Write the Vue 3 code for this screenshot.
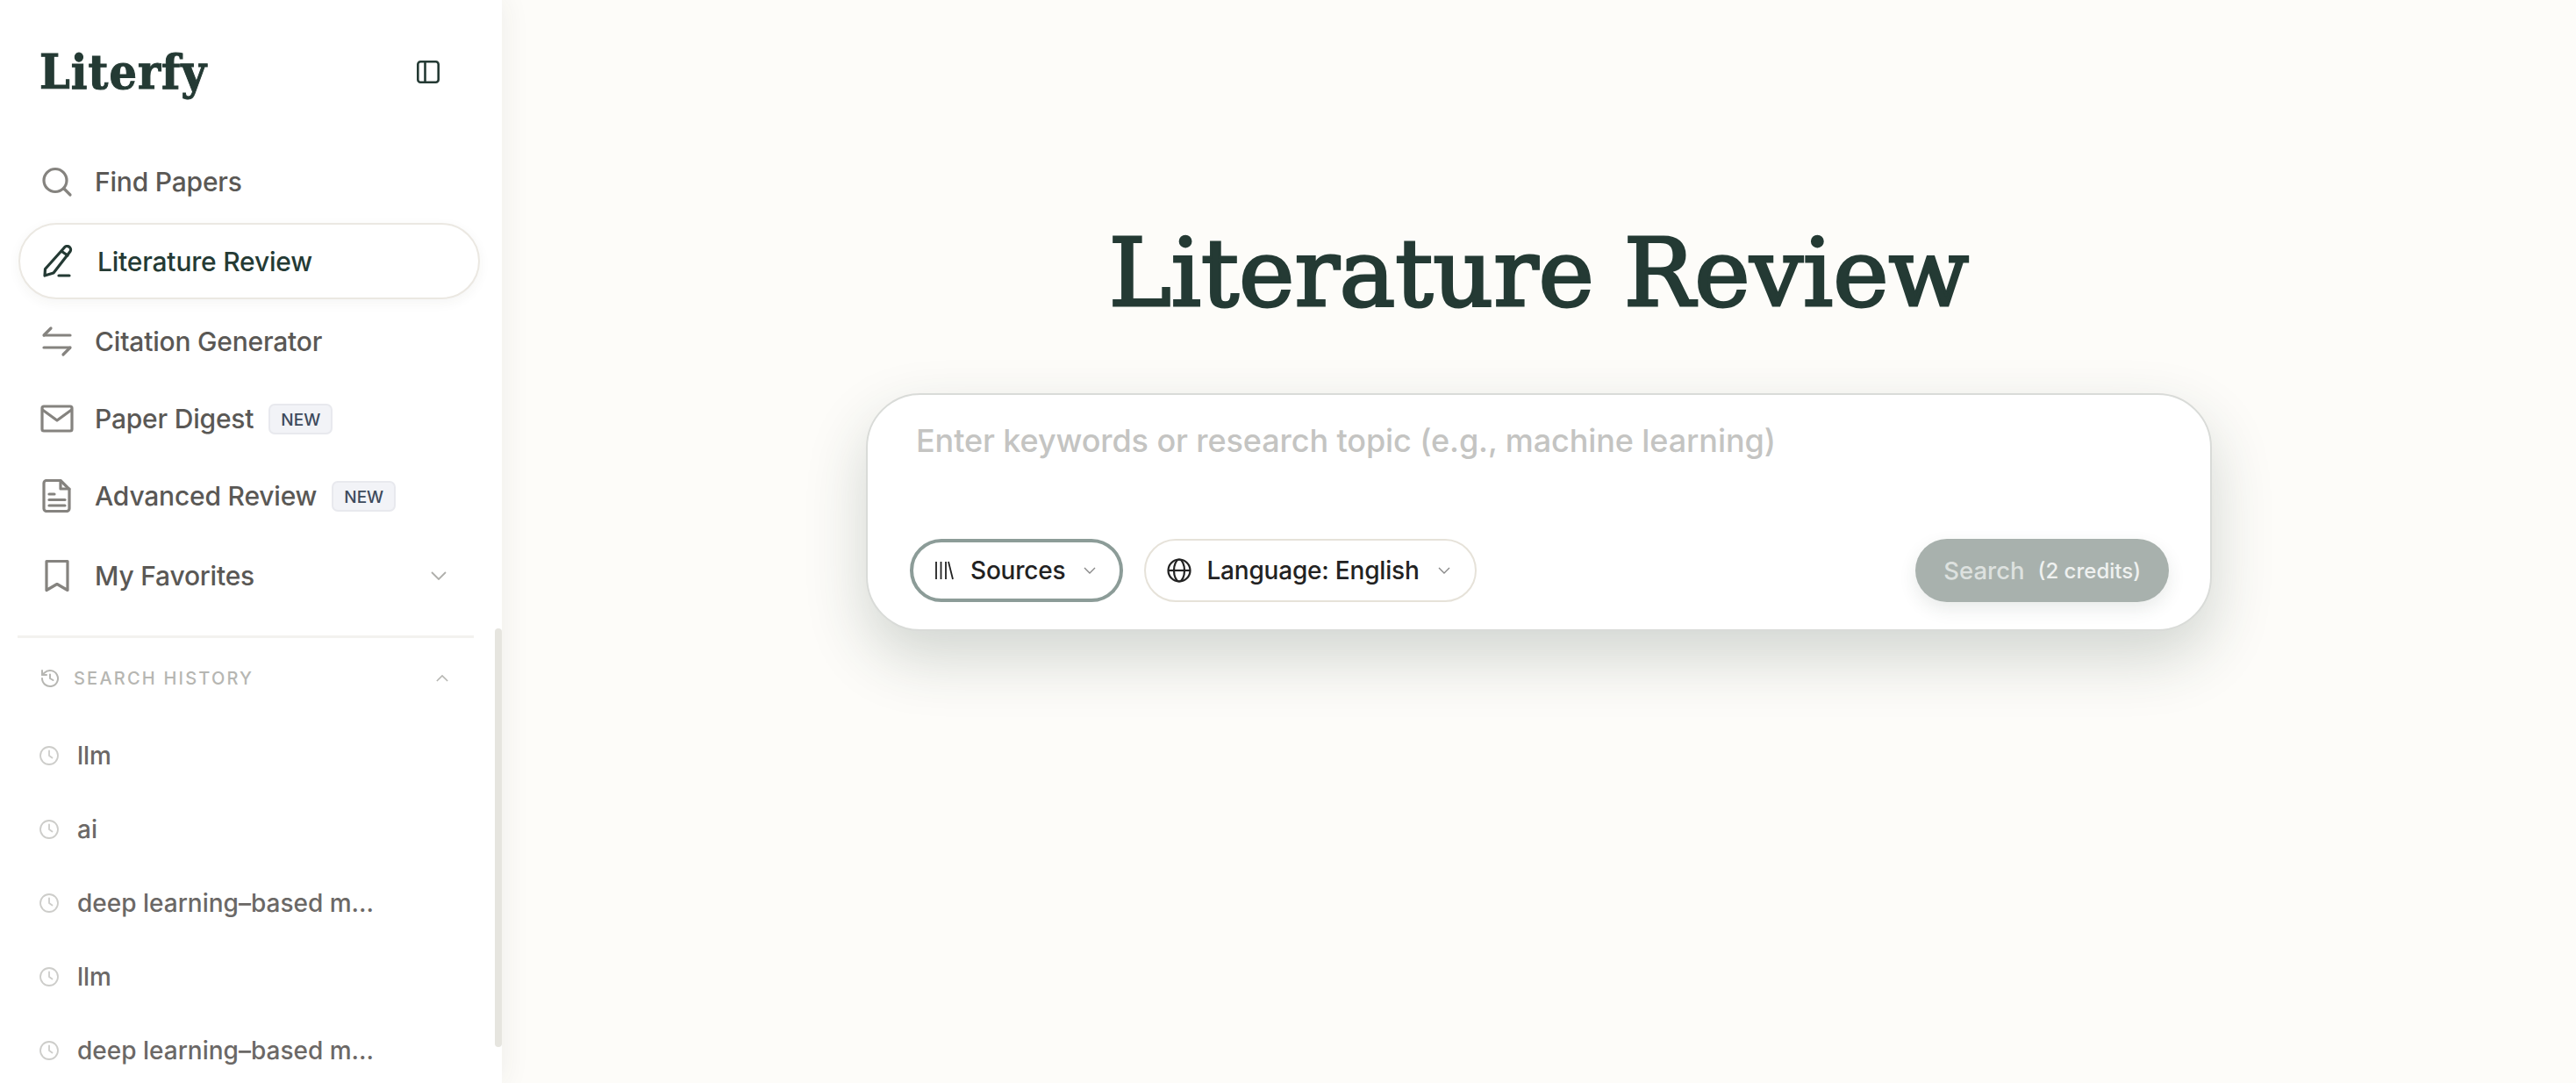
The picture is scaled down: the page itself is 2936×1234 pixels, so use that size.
<template>
  <div class="app">
    <aside class="sidebar">
      <div class="brand">
        <span class="logo">Literfy</span>
        <button class="collapse">
          <svg viewBox="0 0 26 26" width="26" height="26" fill="none" stroke="currentColor" stroke-width="2.6">
            <rect x="1.3" y="1.3" width="23.4" height="23.4" rx="3" />
            <line x1="9.5" y1="1.3" x2="9.5" y2="24.7" />
          </svg>
        </button>
      </div>

      <nav class="nav">
        <a v-for="item in navItems" :key="item.label" class="nav-item" :class="{ active: item.active }">
          <svg class="nav-icon" viewBox="0 0 38 38" fill="none" stroke="currentColor" stroke-width="3.2" stroke-linecap="round" stroke-linejoin="round">
            <path v-for="d in item.icon" :key="d" :d="d" />
          </svg>
          <span class="nav-label">{{ item.label }}</span>
          <span v-if="item.badge" class="badge">NEW</span>
          <svg v-if="item.chevron" class="nav-chevron" viewBox="0 0 18 10" fill="none" stroke="currentColor" stroke-width="1.8">
            <path d="M1 1l8 8 8-8" />
          </svg>
        </a>
      </nav>

      <div class="history">
        <div class="history-head">
          <svg class="history-icon" viewBox="0 0 22 22" fill="none" stroke="currentColor" stroke-width="2" stroke-linecap="round" stroke-linejoin="round">
            <path d="M2 11a9 9 0 1 0 2.8-6.5L2 7" />
            <path d="M2 2v5h5" />
            <path d="M11 6.5V11l3.5 2" />
          </svg>
          <span class="history-title">SEARCH HISTORY</span>
          <svg class="history-chevron" viewBox="0 0 16 9" fill="none" stroke="currentColor" stroke-width="1.8">
            <path d="M1 8l7-7 7 7" />
          </svg>
        </div>
        <div v-for="(q, i) in history" :key="i" class="history-item">
          <svg class="clock" viewBox="0 0 22 22" fill="none" stroke="currentColor" stroke-width="1.8" stroke-linecap="round" stroke-linejoin="round">
            <circle cx="11" cy="11" r="10" />
            <path d="M11 5.5V11l3.5 2.5" />
          </svg>
          <span class="history-text">{{ q }}</span>
        </div>
      </div>

      <div class="scroll-thumb"></div>
    </aside>

    <main class="main">
      <h1 class="title">Literature Review</h1>
      <div class="search-card">
        <div class="placeholder">Enter keywords or research topic (e.g., machine learning)</div>
        <div class="toolbar">
          <button class="pill pill-focus">
            <svg class="pill-icon sources-icon" viewBox="0 0 22 24" fill="none" stroke="currentColor" stroke-width="1.8">
              <path d="M2 2v20M7.5 2v20M13 2v20M16 2l5 20" />
            </svg>
            <span>Sources</span>
            <svg class="pill-chevron" viewBox="0 0 14 8" fill="none" stroke="currentColor" stroke-width="1.4">
              <path d="M1 1l6 6 6-6" />
            </svg>
          </button>
          <button class="pill">
            <svg class="pill-icon" viewBox="0 0 28 28" fill="none" stroke="currentColor" stroke-width="2.2">
              <circle cx="14" cy="14" r="12.5" />
              <ellipse cx="14" cy="14" rx="6" ry="12.5" />
              <path d="M1.5 14h25" />
            </svg>
            <span>Language: English</span>
            <svg class="pill-chevron" viewBox="0 0 14 8" fill="none" stroke="currentColor" stroke-width="1.4">
              <path d="M1 1l6 6 6-6" />
            </svg>
          </button>
          <button class="search-btn">
            <span class="search-word">Search</span>
            <span class="credits">(2 credits)</span>
          </button>
        </div>
      </div>
    </main>
  </div>
</template>

<script setup>
const navItems = [
  { label: 'Find Papers', icon: ['M17 4.5a13 13 0 1 0 0 26 13 13 0 0 0 0-26z', 'M27 27l7 7'] },
  {
    label: 'Literature Review',
    active: true,
    icon: ['M27 3.5a4 4 0 0 1 7 4L15 32l-10 3 .5-7.5z', 'M24.5 7.5l6.5 4.5', 'M21 35h12']
  },
  { label: 'Citation Generator', icon: ['M34 12H5', 'M12 4l-8 8', 'M4 26h29', 'M26 34l8-8'] },
  {
    label: 'Paper Digest',
    badge: true,
    icon: ['M4 5h30a2 2 0 0 1 2 2v24a2 2 0 0 1-2 2H4a2 2 0 0 1-2-2V7a2 2 0 0 1 2-2z', 'M2.5 9L19 21 35.5 9']
  },
  {
    label: 'Advanced Review',
    badge: true,
    icon: [
      'M7 1.5h16l10 10v22a3 3 0 0 1-3 3H7a3 3 0 0 1-3-3v-29a3 3 0 0 1 3-3z',
      'M23 2v9h10',
      'M10 17h6',
      'M10 23.5h18',
      'M10 30h18'
    ]
  },
  { label: 'My Favorites', chevron: true, icon: ['M7 2.5h24v33l-12-7-12 7z'] }
]

const history = ['llm', 'ai', 'deep learning–based m...', 'llm', 'deep learning–based m...']
</script>

<style>
html,
body {
  margin: 0;
  height: 100%;
  overflow: hidden;
  background: #fdfcf9;
}
</style>

<style scoped>
.app {
  display: flex;
  height: 1234px;
  font-family: Inter, "Noto Sans", sans-serif;
  color: #5a5855;
}
.sidebar {
  position: relative;
  flex: 0 0 572px;
  height: 100%;
  box-sizing: border-box;
  background: #fff;
  overflow: hidden;
  box-shadow: 2px 0 30px rgba(60, 55, 40, 0.07);
  z-index: 1;
}
.brand {
  display: flex;
  align-items: center;
  justify-content: space-between;
  height: 163px;
  padding: 0 71px 0 45px;
}
.logo {
  font-family: "DejaVu Serif", serif;
  font-stretch: condensed;
  font-weight: 700;
  font-size: 55px;
  letter-spacing: 1px;
  -webkit-text-stroke: 1px #243a34;
  color: #243a34;
}
.collapse {
  display: flex;
  padding: 0;
  border: none;
  background: none;
  color: #243a34;
}
.nav {
  display: flex;
  flex-direction: column;
  padding: 0 25px 0 21px;
}
.nav-item {
  display: flex;
  align-items: center;
  height: 88px;
  padding: 0 36px 0 23px;
  border: 2px solid transparent;
  border-radius: 44px;
  box-sizing: border-box;
  font-size: 30px;
  font-weight: 500;
  letter-spacing: -0.2px;
}
.nav-item:last-child {
  margin-top: 3px;
}
.nav-item.active {
  height: 87px;
  margin: 3px 0 4px;
  background: #fff;
  border-color: #ebe8e2;
  color: #243a34;
  box-shadow: 0 4px 14px rgba(60, 55, 40, 0.05);
}
.nav-icon {
  flex: none;
  width: 38px;
  height: 38px;
  margin-right: 24px;
  color: #85837f;
}
.active .nav-icon {
  color: #243a34;
  margin-right: 27px;
}
.badge {
  margin-left: 17px;
  padding: 0 12px;
  height: 35px;
  line-height: 33px;
  box-sizing: border-box;
  background: #f2f3f7;
  border: 2px solid #e8e9ee;
  border-radius: 7px;
  font-size: 19px;
  font-weight: 500;
  letter-spacing: 0;
  color: #3d4a5c;
}
.nav-chevron {
  width: 18px;
  height: 10px;
  margin-left: auto;
  color: #aeaeaa;
}
.history {
  margin: 24px 32px 0 20px;
  border-top: 3px solid #f3f2ef;
}
.history-head {
  display: flex;
  align-items: center;
  height: 92px;
  padding: 0 0 0 26px;
  color: #b6b6b2;
}
.history-icon {
  width: 22px;
  height: 22px;
  margin-right: 16px;
}
.history-title {
  font-size: 20px;
  font-weight: 500;
  letter-spacing: 2.2px;
}
.history-chevron {
  width: 14px;
  height: 8px;
  margin-left: auto;
  margin-right: 29px;
}
.history-item {
  display: flex;
  align-items: center;
  height: 84px;
  padding-left: 25px;
  color: #6b6866;
  font-size: 28px;
  font-weight: 500;
}
.clock {
  width: 22px;
  height: 22px;
  margin-right: 21px;
  color: #cdcdca;
}
.scroll-thumb {
  position: absolute;
  top: 716px;
  right: 0;
  width: 8px;
  height: 477px;
  border-radius: 4px;
  background: #e6e5df;
}
.main {
  flex: 1;
  display: flex;
  flex-direction: column;
  align-items: center;
  background: #fdfcf9;
}
.title {
  margin: 241px 0 0;
  height: 207px;
  font-family: "DejaVu Serif", serif;
  font-weight: 400;
  font-size: 107px;
  line-height: 140px;
  -webkit-text-stroke: 3px #243a34;
  color: #243a34;
}
.search-card {
  box-sizing: border-box;
  width: 1534px;
  height: 271px;
  padding: 0 47px 31px 48px;
  display: flex;
  flex-direction: column;
  justify-content: space-between;
  background: #fff;
  border: 2px solid #d9dbd8;
  border-radius: 62px;
  box-shadow: 0 30px 70px rgba(36, 58, 52, 0.2);
}
.placeholder {
  margin: 28px 0 0 7px;
  font-size: 36px;
  font-weight: 500;
  letter-spacing: -0.1px;
  line-height: 48px;
  color: #c4c4c2;
}
.toolbar {
  display: flex;
  align-items: center;
  gap: 24px;
}
.pill {
  display: flex;
  align-items: center;
  height: 72px;
  padding: 0 28px 0 24px;
  background: #fff;
  border: 2px solid #e6e2d9;
  border-radius: 36px;
  font-family: inherit;
  font-size: 28px;
  font-weight: 500;
  letter-spacing: -0.2px;
  color: #222;
}
.pill-focus {
  border: 4px solid #8c9c98;
  padding: 0 27px 0 24px;
}
.pill-icon {
  width: 28px;
  height: 28px;
  margin-right: 17px;
}
.sources-icon {
  width: 22px;
  height: 24px;
  margin-right: 19px;
}
.pill-chevron {
  width: 14px;
  height: 8px;
  margin-left: 21px;
  color: #888;
}
.search-btn {
  display: flex;
  align-items: center;
  gap: 15px;
  height: 72px;
  margin-left: auto;
  padding: 0 32px;
  background: #a8b1ad;
  border: none;
  border-radius: 36px;
  box-shadow: 0 8px 20px rgba(36, 58, 52, 0.1);
  font-family: inherit;
  font-weight: 500;
  color: #fff;
}
.search-word {
  font-size: 27.5px;
  color: #dde1df;
}
.credits {
  font-size: 24px;
  color: #eff1f0;
}
</style>
